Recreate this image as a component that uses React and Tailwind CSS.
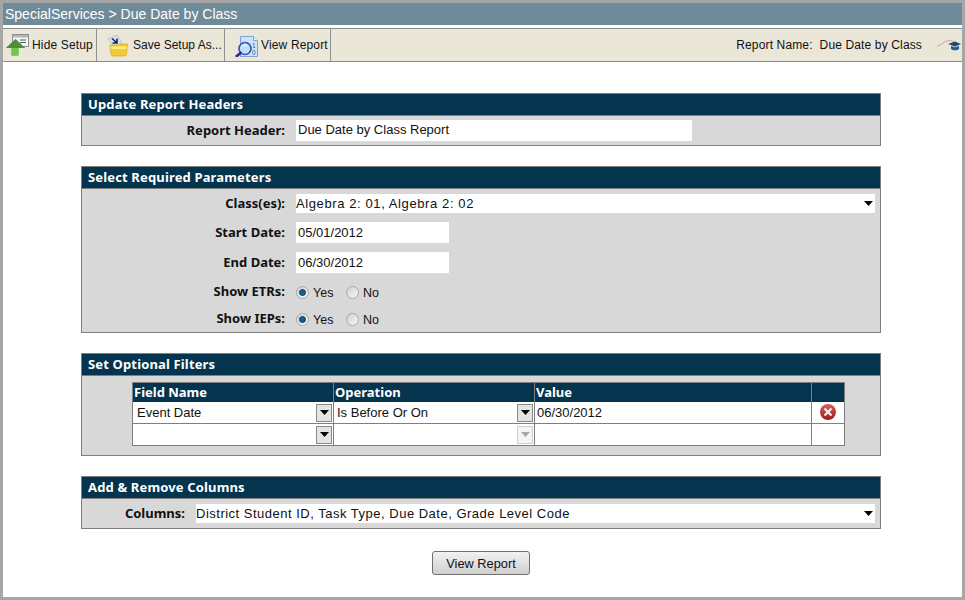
import React from 'react';

const headerFont = "font-['Noto_Sans','DejaVu_Sans',sans-serif]";

function Caret({ disabled }) {
  return (
    <svg width="9" height="5" viewBox="0 0 9 5" className="shrink-0">
      <path d="M0 0h9L4.5 5z" fill={disabled ? '#a8a8a8' : '#000'} />
    </svg>
  );
}

function HideSetupIcon() {
  return (
    <svg width="24" height="22" viewBox="0 0 24 22" className="shrink-0">
      <rect x="6.500" y="0.500" width="16" height="12" fill="#f6f6f6" stroke="#8a8f96" />
      <rect x="7" y="1" width="15" height="2.500" fill="#aeb9c6" />
      <rect x="14" y="5.500" width="6" height="1" fill="#555" />
      <rect x="14" y="8" width="6" height="1" fill="#555" />
      <path d="M9.500 5 0 14h5.500v7.500h7V14H19z" fill="#58b23a" />
      <path d="M9.500 5 0 14h19z" fill="#4e8f3c" />
      <path d="M5.500 14h7v7.500h-7z" fill="#6fc94c" />
    </svg>
  );
}

function SaveIcon() {
  return (
    <svg width="21" height="23" viewBox="0 0 21 23" className="shrink-0">
      <path d="M1 5l9-4 5 8-8 4z" fill="#dfe0f0" stroke="#a8acc8" strokeWidth="0.600" />
      <path d="M5 4.500l4.500 4M10 4.500v4.500H5.500" fill="none" stroke="#16245e" strokeWidth="1.600" />
      <path d="M3 11h7l2-1h8.500l-1 10.500c0 .8-.6 1.500-1.400 1.500H6c-1 0-1.600-.6-1.800-1.500z" fill="#f4c92e" stroke="#cf9f18" strokeWidth="0.600" />
      <path d="M3.800 12.500h16.200l-.3 2.500H4.200z" fill="#fdeb8c" />
    </svg>
  );
}

function ViewReportIcon() {
  return (
    <svg width="24" height="24" viewBox="0 0 24 24" className="shrink-0">
      <path d="M5.500 3.500h13l4 4v16h-17z" fill="#cfe2f7" stroke="#7fa2d2" />
      <path d="M18.500 3.500v4h4" fill="#f0f6fd" stroke="#7fa2d2" />
      <text x="17" y="14.500" fontSize="6.500" fill="#2a5aa8" fontFamily="Liberation Sans">1</text>
      <text x="17" y="21.500" fontSize="6.500" fill="#2a5aa8" fontFamily="Liberation Sans">0</text>
      <circle cx="10" cy="15.500" r="6" fill="#bde2f8" stroke="#3c50b4" strokeWidth="1.700" />
      <path d="M7.500 13a3.500 3.500 0 0 1 4.500-.5" fill="none" stroke="#fff" />
      <path d="M5.500 20 1.800 23" stroke="#33289a" strokeWidth="2.800" strokeLinecap="round" />
    </svg>
  );
}

function CapLogo() {
  return (
    <svg width="24" height="12" viewBox="0 0 24 12" className="shrink-0">
      <path d="M0 7C4 7 7 1.500 12 1.500c2 0 4 .8 5 1" fill="none" stroke="#e88a9c" strokeWidth="0.900" />
      <path d="M11 5l7-2.500L24 5l-6 2.500z" fill="#174a7c" />
      <path d="M14 7l4 1.200L22 7v3c-1.500 1.800-6.500 1.800-8 0z" fill="#1c5f90" />
    </svg>
  );
}

function DeleteIcon() {
  return (
    <svg width="16" height="16" viewBox="0 0 16 16">
      <defs>
        <linearGradient id="del" x1="0" y1="0" x2="0" y2="1">
          <stop offset="0" stopColor="#d9605c" />
          <stop offset="1" stopColor="#9c1a16" />
        </linearGradient>
      </defs>
      <circle cx="8" cy="8" r="8" fill="url(#del)" />
      <path d="M5.300 5.300l5.400 5.400M10.700 5.300l-5.400 5.400" stroke="#eee" strokeWidth="2.300" strokeLinecap="square" />
    </svg>
  );
}

function Radio({ checked }) {
  return (
    <span className="w-[13px] h-[13px] rounded-full border border-[#a8a8a8] bg-gradient-to-br from-[#d0d0d0] to-[#f8f8f8] flex items-center justify-center shrink-0">
      {checked && <span className="w-[7px] h-[7px] rounded-full bg-[#15608f] border border-[#0b3d5e]" />}
    </span>
  );
}

function ToolButton({ icon, label, className }) {
  return (
    <div className={`h-[32px] flex items-center border-r border-[#8f8f8f] ${className}`}>
      {icon}
      <span>{label}</span>
    </div>
  );
}

function Panel({ title, className, children }) {
  return (
    <section className={`border border-[#7f7f7f] bg-[#d8d8d8] ${className}`}>
      <h2 className={`h-[21px] bg-[#04344e] border-b border-[#7f7f7f] box-content pl-[6px] text-white text-[13px] font-bold leading-[21px] tracking-[0.15px] ${headerFont}`}>
        {title}
      </h2>
      {children}
    </section>
  );
}

function Row({ label, children, className, labelWidth = 'w-[203px]' }) {
  return (
    <div className={`flex items-center ${className}`}>
      <label className={`text-right text-[13px] font-bold text-[#111] ${headerFont} ${labelWidth}`}>{label}</label>
      <div className="flex items-center flex-1 ml-[11px]">{children}</div>
    </div>
  );
}

function TextBox({ value, className }) {
  return (
    <div className={`h-[21px] bg-white pl-[2px] text-[13px] text-[#111] ${className}`}>
      {value}
    </div>
  );
}

function WideSelect({ value, className }) {
  return (
    <div className={`h-[19px] bg-white flex items-center justify-between pr-[2px] text-[13px] text-[#111] ${className}`}>
      <span>{value}</span>
      <Caret />
    </div>
  );
}

function RadioPair() {
  return (
    <div className="flex items-center text-[12.5px] text-[#111] pt-[1px]">
      <Radio checked />
      <span className="ml-[4px] w-[33px] pt-[2px]">Yes</span>
      <Radio />
      <span className="ml-[4px] pt-[2px]">No</span>
    </div>
  );
}

function DropCell({ value, disabled, className = 'pl-[4px]' }) {
  return (
    <div className={`flex items-center h-full bg-white pr-[1px] text-[13px] text-[#111] ${className}`}>
      <span className="flex-1">{value}</span>
      <span className={`w-[16px] h-[18px] border flex items-center justify-center ${disabled ? 'border-[#d0d0d0] bg-[#f4f4f4]' : 'border-[#8a8a8a] bg-[#e4e4e4]'}`}>
        <Caret disabled={disabled} />
      </span>
    </div>
  );
}

export default function App() {
  return (
    <div className="w-[965px] h-[600px] border-[3px] border-[#a6a6a6] bg-white font-['Liberation_Sans',sans-serif] overflow-hidden">
      <div className="h-[22px] bg-[#6f8a99] text-white text-[14px] leading-[22px] pl-[2px]">SpecialServices &gt; Due Date by Class</div>
      <div className="h-[34px] mt-[3px] bg-[#ebe7d8] border-y border-[#8a8a8a] flex items-center text-[12px] text-[#111]">
        <ToolButton icon={<HideSetupIcon />} label="Hide Setup" className="gap-[2px] pl-[3px] w-[94px] tracking-[0.15px]" />
        <ToolButton icon={<SaveIcon />} label="Save Setup As..." className="gap-[5px] pl-[10px] w-[128px]" />
        <ToolButton icon={<ViewReportIcon />} label="View Report" className="gap-[2px] pl-[10px] w-[106px] tracking-[0.15px]" />
        <span className="ml-auto tracking-[0.14px]">Report Name:&nbsp; Due Date by Class</span>
        <span className="ml-[15px] mr-[1px]"><CapLogo /></span>
      </div>

      <main className="mt-[31px] ml-[78px] w-[800px]">
        <Panel title="Update Report Headers" className="h-[53px]">
          <Row label="Report Header:" className="h-[29px]">
            <TextBox value="Due Date by Class Report" className="w-[396px] leading-[20px]" />
          </Row>
        </Panel>

        <Panel title="Select Required Parameters" className="h-[167px] mt-[20px]">
          <div className="pt-[5px] flex flex-col">
            <Row label="Class(es):" className="h-[19px]">
              <WideSelect value="Algebra 2: 01, Algebra 2: 02" className="w-[579px] tracking-[0.6px]" />
            </Row>
            <Row label="Start Date:" className="h-[21px] mt-[9px]">
              <TextBox value="05/01/2012" className="w-[153px] leading-[22px]" />
            </Row>
            <Row label="End Date:" className="h-[21px] mt-[9px]">
              <TextBox value="06/30/2012" className="w-[153px] leading-[22px]" />
            </Row>
            <Row label="Show ETRs:" className="h-[20px] mt-[9px]"><RadioPair /></Row>
            <Row label="Show IEPs:" className="h-[20px] mt-[7px]"><RadioPair /></Row>
          </div>
        </Panel>

        <Panel title="Set Optional Filters" className="h-[103px] mt-[20px]">
          <div className="pt-[6px] pl-[50px]">
            <div className="w-[713px] border border-[#7f7f7f] bg-white grid grid-cols-[201px_201px_277px_1fr] grid-rows-[19px_22px_21px] text-[13px]">
              {['Field Name', 'Operation', 'Value', ''].map((h, i) => (
                <div key={i} className={`bg-[#04344e] text-white font-bold pl-[1px] leading-[18px] text-[13px] ${headerFont} ${i < 3 ? 'border-r border-[#7f7f7f]' : ''}`}>{h}</div>
              ))}
              <div className="border-r border-b border-[#7f7f7f]"><DropCell value="Event Date" /></div>
              <div className="border-r border-b border-[#7f7f7f]"><DropCell value="Is Before Or On" className="pl-[3px]" /></div>
              <div className="border-r border-b border-[#7f7f7f] pl-[2px] leading-[21px] text-[#111]">06/30/2012</div>
              <div className="border-b border-[#7f7f7f] flex items-center justify-center pb-[1px]"><DeleteIcon /></div>
              <div className="border-r border-[#7f7f7f]"><DropCell value="" /></div>
              <div className="border-r border-[#7f7f7f]"><DropCell value="" disabled /></div>
              <div className="border-r border-[#7f7f7f]" />
              <div />
            </div>
          </div>
        </Panel>

        <Panel title="Add &amp; Remove Columns" className="h-[53px] mt-[20px]">
          <Row label="Columns:" className="h-[29px]" labelWidth="w-[103px]">
            <WideSelect value="District Student ID, Task Type, Due Date, Grade Level Code" className="w-[679px] tracking-[0.5px]" />
          </Row>
        </Panel>

        <div className="mt-[22px] flex justify-center">
          <button className="w-[98px] h-[24px] pt-[1px] rounded-[3px] border border-[#707070] bg-gradient-to-b from-[#f2f2f2] to-[#cfcfcf] text-[12.8px] text-[#111]">View Report</button>
        </div>
      </main>
    </div>
  );
}
